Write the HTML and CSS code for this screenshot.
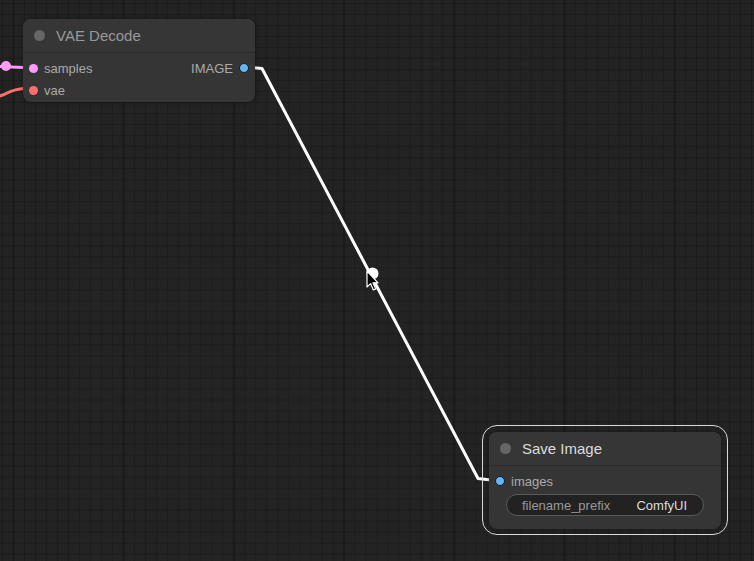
FILE: index.html
```html
<!DOCTYPE html>
<html>
<head>
<meta charset="utf-8">
<link rel="stylesheet" href="styles.css">
</head>
<body>
<div class="canvas">
  <svg class="links" width="754" height="561" viewBox="0 0 754 561">
    <path class="link pink" d="M0 66.5 L23 67.5"/>
    <circle cx="6" cy="66" r="5" fill="#ff9cf9"/>
    <path class="link red" d="M-10 99 C 5 96, 10 89, 24 88.5"/>
    <path class="link white" d="M244 67 L262 68.5 L478 478.5 L500 481"/>
    <circle cx="372.5" cy="273.5" r="6" fill="#ffffff"/>
  </svg>

  <div class="node vae">
    <div class="node-title">
      <span class="title-dot"></span>
      <span class="title-text dim">VAE Decode</span>
    </div>
    <div class="node-body">
      <div class="row">
        <div class="slot in"><span class="dot pink-dot"></span><span class="label">samples</span></div>
        <div class="slot out"><span class="label">IMAGE</span><span class="dot blue-dot"></span></div>
      </div>
      <div class="row">
        <div class="slot in"><span class="dot red-dot"></span><span class="label">vae</span></div>
      </div>
    </div>
  </div>

  <div class="selection"></div>
  <div class="node save">
    <div class="node-title">
      <span class="title-dot"></span>
      <span class="title-text bright">Save Image</span>
    </div>
    <div class="node-body">
      <div class="row">
        <div class="slot in"><span class="dot blue-dot"></span><span class="label">images</span></div>
      </div>
      <div class="widget">
        <span class="w-name">filename_prefix</span>
        <span class="w-value">ComfyUI</span>
      </div>
    </div>
  </div>

  <svg class="cursor" width="14" height="22" viewBox="0 0 14 22">
    <path d="M1 1 L1 17 L4.6 13.6 L7.3 20 L9.6 19 L7 12.8 L12 12.8 Z" fill="#000" stroke="#fff" stroke-width="1.2" stroke-linejoin="round"/>
  </svg>
</div>
</body>
</html>
```

FILE: styles.css
```css
html, body {
  margin: 0;
  padding: 0;
  background: #222222;
}

.canvas {
  position: relative;
  width: 754px;
  height: 561px;
  overflow: hidden;
  background-color: #232323;
  background-image:
    linear-gradient(90deg, #1a1a1a 2px, transparent 2px),
    linear-gradient(90deg, #1c1c1c 1px, transparent 1px),
    linear-gradient(180deg, #1c1c1c 1px, transparent 1px);
  background-size: 110.2px 100%, 11.02px 11.02px, 11.02px 11.02px;
  background-position: 12.5px 0, 2px 0, 0 3px;
  font-family: "Liberation Sans", Arial, sans-serif;
}

.links {
  position: absolute;
  left: 0;
  top: 0;
}

.link {
  fill: none;
  stroke-width: 3;
  stroke-linecap: round;
  stroke-linejoin: round;
}
.link.pink { stroke: #ff9cf9; }
.link.red { stroke: #ff6e6e; }
.link.white { stroke: #ffffff; }

.node {
  position: absolute;
  width: 232px;
  background: #353535;
  border-radius: 8px;
  box-shadow: 0 0 4px rgba(0, 0, 0, 0.35);
  display: flex;
  flex-direction: column;
}

.vae {
  left: 23px;
  top: 19px;
  height: 83px;
}

.save {
  left: 489px;
  top: 432px;
  height: 97px;
}

.node-title {
  height: 33px;
  display: flex;
  align-items: center;
  padding-left: 11px;
  border-bottom: 1px solid #2b2b2b;
  background: #363636;
  border-radius: 8px 8px 0 0;
}

.title-dot {
  width: 11px;
  height: 11px;
  border-radius: 50%;
  background: #666666;
  margin-right: 11px;
}

.title-text {
  font-size: 15px;
  line-height: 33px;
}
.title-text.dim { color: #999999; }
.title-text.bright { color: #dddddd; }

.node-body {
  padding-top: 4px;
  display: flex;
  flex-direction: column;
}

.row {
  height: 22px;
  display: flex;
  align-items: center;
  justify-content: space-between;
}

.slot {
  display: flex;
  align-items: center;
  font-size: 13px;
  color: #aaaaaa;
}

.slot.in {
  padding-left: 6px;
}
.slot.in .label {
  margin-left: 6px;
}

.slot.out {
  padding-right: 6px;
}
.slot.out .label {
  margin-right: 6px;
  color: #aaaaaa;
}

.dot {
  width: 9px;
  height: 9px;
  border-radius: 50%;
  box-sizing: border-box;
}
.pink-dot { background: #ff9cf9; }
.red-dot { background: #ff6e6e; }
.blue-dot {
  background: #64b5f6;
  border: 1px solid #1a1a1a;
  width: 10px;
  height: 10px;
}

.widget {
  margin: 2px 17px 0 17px;
  height: 22px;
  box-sizing: border-box;
  border: 1px solid #5a5a5a;
  border-radius: 11px;
  background: #222222;
  display: flex;
  align-items: center;
  justify-content: space-between;
  padding: 0 16px 0 15px;
  font-size: 13px;
}

.w-name { color: #999999; }
.w-value { color: #dddddd; }

.selection {
  position: absolute;
  left: 482px;
  top: 425px;
  width: 246px;
  height: 110px;
  box-sizing: border-box;
  border: 1.5px solid #d8d8d8;
  border-radius: 15px;
}

.cursor {
  position: absolute;
  left: 366px;
  top: 270px;
}
```
